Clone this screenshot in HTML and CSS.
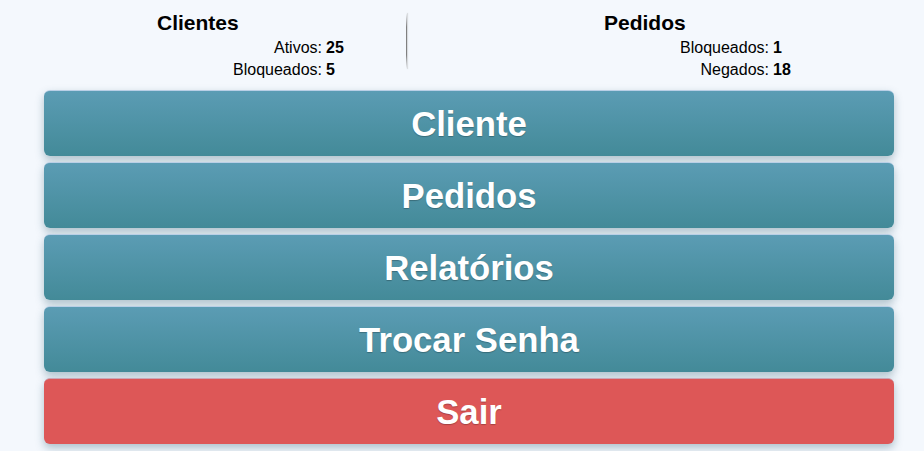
FILE: index.html
```html
<!DOCTYPE html>
<html lang="pt-BR">
<head>
<meta charset="utf-8">
<title>Painel</title>
<link rel="stylesheet" href="styles.css">
</head>
<body>
<div class="page">
  <header class="summary">
    <section class="stat stat-left">
      <h2 class="stat-title">Clientes</h2>
      <dl class="stat-list">
        <dt>Ativos:</dt><dd>25</dd>
        <dt>Bloqueados:</dt><dd>5</dd>
      </dl>
    </section>
    <div class="divider"></div>
    <section class="stat stat-right">
      <h2 class="stat-title">Pedidos</h2>
      <dl class="stat-list">
        <dt>Bloqueados:</dt><dd>1</dd>
        <dt>Negados:</dt><dd>18</dd>
      </dl>
    </section>
  </header>
  <nav class="menu">
    <button class="menu-btn">Cliente</button>
    <button class="menu-btn">Pedidos</button>
    <button class="menu-btn">Relatórios</button>
    <button class="menu-btn">Trocar Senha</button>
    <button class="menu-btn menu-btn-danger">Sair</button>
  </nav>
</div>
</body>
</html>
```
FILE: styles.css
```css
html, body {
  margin: 0;
  padding: 0;
  background: #ffffff;
}

body {
  font-family: "Liberation Sans", Arial, sans-serif;
  color: #000;
}

.page {
  background: #f4f8fd;
  padding: 11px 30px 7px 44px;
}

.summary {
  display: flex;
  align-items: flex-start;
  height: 79px;
}

.stat {
  padding-left: 113px;
}

.stat-left {
  width: 249px;
}

.stat-right {
  padding-left: 197px;
}

.stat-title {
  margin: 0;
  font-size: 21px;
  line-height: 24px;
  font-weight: bold;
}

.stat-list {
  margin: 2px 0 0 0;
  display: grid;
  grid-template-columns: 165px auto;
  column-gap: 4px;
  font-size: 16px;
  line-height: 22px;
}

.stat-list dt {
  text-align: right;
}

.stat-list dd {
  margin: 0;
  font-weight: bold;
}

.divider {
  width: 1px;
  height: 56px;
  margin-top: 2px;
  background: linear-gradient(to bottom, rgba(130,130,130,0), #808080 25%, #808080 75%, rgba(130,130,130,0));
  box-shadow: 1px 0 1px rgba(150,150,150,0.35);
}

.menu {
  display: flex;
  flex-direction: column;
  gap: 6px;
}

.menu-btn {
  display: block;
  width: 100%;
  height: 66px;
  border: none;
  border-top: 1px solid #b9cfe6;
  border-radius: 6px;
  background: linear-gradient(to bottom, #5b9cb4, #438a98);
  color: #ffffff;
  font-family: "Liberation Sans", Arial, sans-serif;
  font-size: 34.7px;
  font-weight: bold;
  text-shadow: 0 1px 1px rgba(0,0,0,0.25);
  box-shadow: 0 4px 8px rgba(40,90,110,0.35);
  padding: 2px 0 0 0;
  cursor: pointer;
}

.menu-btn-danger {
  background: #dd5757;
  border-top-color: #c9a6b6;
}
```
